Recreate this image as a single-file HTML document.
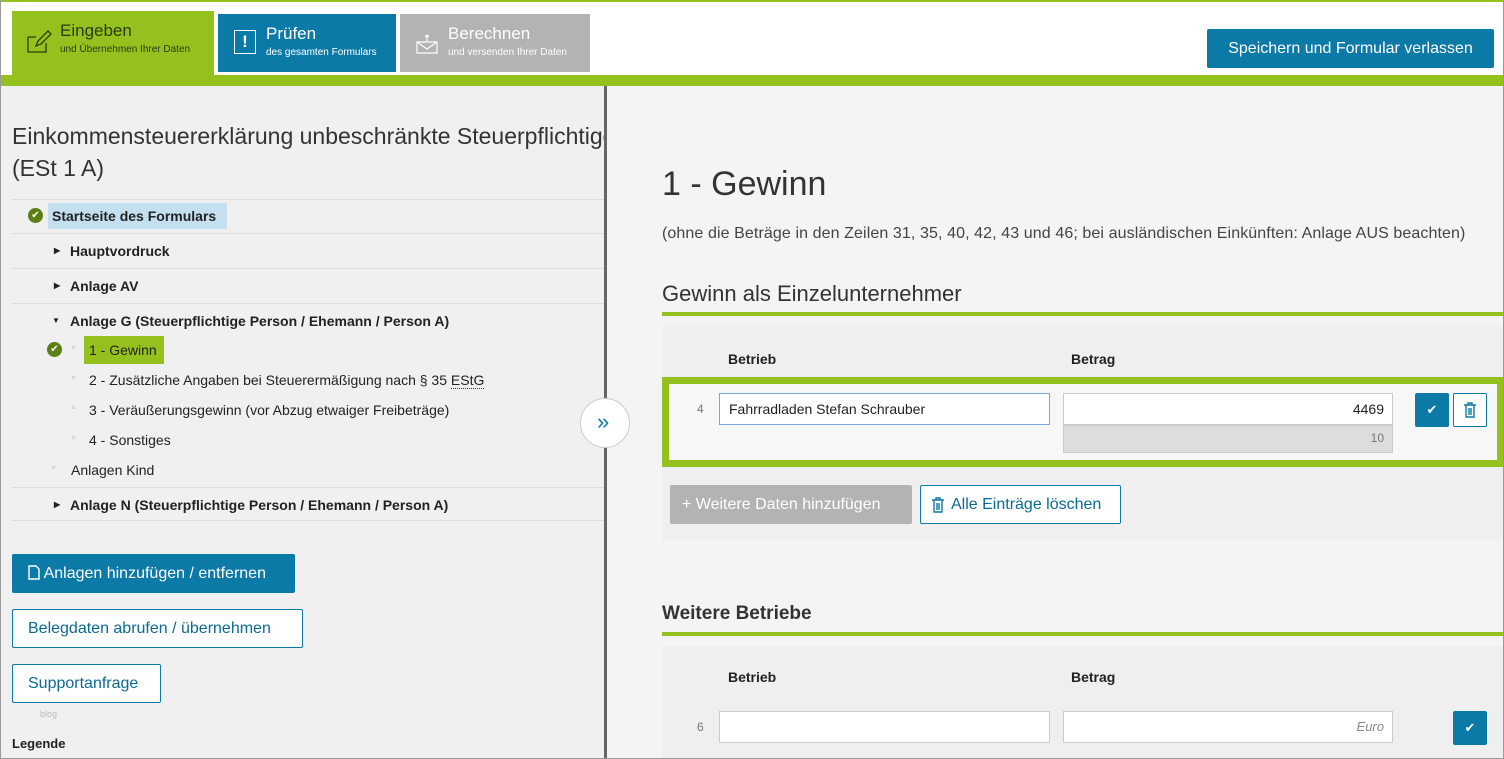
<!DOCTYPE html>
<html><head><meta charset="utf-8"><style>
*{box-sizing:border-box;margin:0;padding:0}
body{width:1504px;height:759px;overflow:hidden;font-family:"Liberation Sans",sans-serif;background:#f4f4f4;position:relative;color:#222}
.a{position:absolute}
.tab{position:absolute;color:#fff;padding:10px 0 0 48px}
.tab b{font-weight:normal;font-size:17px;display:block}
.tab small{font-size:10px;display:block;margin-top:3px}
.row{position:absolute;left:12px;width:592px;border-top:1px solid #ddd;font-size:14px;font-weight:bold;padding-left:58px}
.sub{position:absolute;font-size:14px}
.btn{position:absolute;font-size:16px;border:1px solid #0b7aa6;color:#0b6a93;background:#fff;border-radius:2px;padding:0 15px;line-height:37px}
.inp{position:absolute;background:#fff;border:1px solid #ccc;font-size:14px}
.lbl{position:absolute;font-size:14px;font-weight:bold}
</style></head><body>
<div class="a" style="left:0;top:0;width:1504px;height:2px;background:#95c11f"></div>
<div class="a" style="left:0;top:2px;width:1504px;height:74px;background:#fff"></div>
<div class="a" style="left:0;top:75px;width:1504px;height:11px;background:#95c11f"></div>
<div class="tab" style="left:12px;top:11px;width:202px;height:66px;background:#95c11f;color:#2d3a10"><b>Eingeben</b><small>und Übernehmen Ihrer Daten</small>
<svg class="a" style="left:14px;top:18px" width="26" height="26" viewBox="0 0 26 26" fill="none" stroke="#2d3a10" stroke-width="1.3"><path d="M2 8h8M2 8v15h18v-9"/><path d="M10 17l2-5 10-10 3 3-10 10z"/></svg></div>
<div class="tab" style="left:218px;top:14px;width:178px;height:58px;background:#0b7aa6;padding-left:48px"><b>Prüfen</b><small>des gesamten Formulars</small>
<div class="a" style="left:16px;top:16px;width:22px;height:24px;border:1.5px solid #fff;text-align:center;font-weight:bold;font-size:17px;line-height:21px">!</div></div>
<div class="tab" style="left:400px;top:14px;width:190px;height:58px;background:#b3b3b3"><b>Berechnen</b><small>und versenden Ihrer Daten</small>
<svg class="a" style="left:16px;top:20px" width="22" height="20" viewBox="0 0 22 20" fill="none" stroke="#fff" stroke-width="1.2"><path d="M1 8h20v11H1zM1 8l10 7 10-7M11 1v6M9 3l2-2 2 2"/></svg></div>
<div class="a" style="left:1207px;top:29px;width:287px;height:39px;background:#0b7aa6;color:#fff;font-size:16px;text-align:center;line-height:39px;border-radius:2px">Speichern und Formular verlassen</div>

<div class="a" style="left:0;top:86px;width:604px;height:673px;background:#f0f0f0"></div>
<div class="a" style="left:604px;top:86px;width:3px;height:673px;background:#666"></div>
<div class="a" style="left:12px;top:120px;font-size:23px;color:#333;line-height:32px;width:592px;white-space:nowrap;overflow:hidden">Einkommensteuererklärung unbeschränkte Steuerpflichtige<br>(ESt 1 A)</div>

<div class="row" style="top:199px;height:34px;padding-left:0"></div>
<div class="a" style="left:28px;top:208px;width:15px;height:15px;border-radius:50%;background:#5a7f13;color:#fff;font-size:10px;text-align:center;line-height:15px">✔</div>
<div class="a" style="left:48px;top:203px;width:179px;height:26px;background:#c4dff0;font-size:14px;font-weight:bold;line-height:26px;padding-left:4px">Startseite des Formulars</div>
<div class="row" style="top:233px;height:35px;line-height:34px"><span class="a" style="left:42px;font-size:8px">▶</span>Hauptvordruck</div>
<div class="row" style="top:268px;height:35px;line-height:34px"><span class="a" style="left:42px;font-size:8px">▶</span>Anlage AV</div>
<div class="row" style="top:303px;height:184px;line-height:34px"><span class="a" style="left:40px;font-size:8px">▼</span>Anlage G (Steuerpflichtige Person / Ehemann / Person A)</div>
<div class="a" style="left:47px;top:342px;width:15px;height:15px;border-radius:50%;background:#5a7f13;color:#fff;font-size:10px;text-align:center;line-height:15px">✔</div>
<div class="a" style="left:84px;top:336px;width:80px;height:28px;background:#95c11f"></div>
<div class="sub" style="left:72px;top:342px;color:#999;font-size:9px">▫</div><div class="sub" style="left:89px;top:342px">1 - Gewinn</div>
<div class="sub" style="left:72px;top:372px;color:#999;font-size:9px">▫</div><div class="sub" style="left:89px;top:372px">2 - Zusätzliche Angaben bei Steuerermäßigung nach § 35 <span style="border-bottom:1px dotted #333">EStG</span></div>
<div class="sub" style="left:72px;top:402px;color:#999;font-size:9px">▫</div><div class="sub" style="left:89px;top:402px">3 - Veräußerungsgewinn (vor Abzug etwaiger Freibeträge)</div>
<div class="sub" style="left:72px;top:432px;color:#999;font-size:9px">▫</div><div class="sub" style="left:89px;top:432px">4 - Sonstiges</div>
<div class="sub" style="left:52px;top:462px;color:#999;font-size:9px">▫</div><div class="sub" style="left:71px;top:462px">Anlagen Kind</div>
<div class="row" style="top:487px;height:34px;line-height:34px;border-bottom:1px solid #ddd"><span class="a" style="left:42px;font-size:8px">▶</span>Anlage N (Steuerpflichtige Person / Ehemann / Person A)</div>
<div class="a" style="left:580px;top:398px;width:50px;height:50px;border-radius:50%;background:#fff;border:1px solid #ccc;color:#0b7aa6;font-size:22px;line-height:46px;padding-left:16px">»</div>

<div class="btn" style="left:12px;top:554px;height:39px;width:283px;background:#0b7aa6;color:#fff">
<svg style="vertical-align:-2px" width="12" height="15" viewBox="0 0 12 15" fill="none" stroke="#fff" stroke-width="1.4"><path d="M1 1h7l3 3v10H1z"/></svg> Anlagen hinzufügen / entfernen</div>
<div class="btn" style="left:12px;top:609px;height:39px;width:291px">Belegdaten abrufen / übernehmen</div>
<div class="btn" style="left:12px;top:664px;height:39px;width:149px">Supportanfrage</div>
<div class="a" style="left:40px;top:709px;font-size:9px;color:#bbb">blog</div>
<div class="a" style="left:12px;top:736px;font-size:13px;font-weight:bold">Legende</div>

<div class="a" style="left:662px;top:165px;font-size:34px;color:#333">1 - Gewinn</div>
<div class="a" style="left:662px;top:225px;font-size:16px;color:#444;letter-spacing:0.1px">(ohne die Beträge in den Zeilen 31, 35, 40, 42, 43 und 46; bei ausländischen Einkünften: Anlage AUS beachten)</div>
<div class="a" style="left:662px;top:281px;font-size:22px;color:#333">Gewinn als Einzelunternehmer</div>
<div class="a" style="left:662px;top:312px;width:842px;height:4px;background:#95c11f"></div>
<div class="a" style="left:662px;top:325px;width:842px;height:215px;background:#efefef"></div>
<div class="lbl" style="left:728px;top:351px">Betrieb</div><div class="lbl" style="left:1071px;top:351px">Betrag</div>
<div class="a" style="left:662px;top:377px;width:842px;height:90px;border:7px solid #95c11f;background:#f7f7f7"></div>
<div class="a" style="left:697px;top:402px;font-size:12px;color:#777">4</div>
<div class="inp" style="left:719px;top:393px;width:331px;height:32px;border-color:#7aa7d9;padding:7px 9px">Fahrradladen Stefan Schrauber</div>
<div class="inp" style="left:1063px;top:393px;width:330px;height:32px;text-align:right;padding:7px 8px">4469</div>
<div class="a" style="left:1063px;top:425px;width:330px;height:28px;background:#ddd;border:1px solid #ccc;text-align:right;font-size:12px;color:#777;padding:5px 8px">10</div>
<div class="a" style="left:1415px;top:393px;width:34px;height:34px;background:#0b7aa6;color:#fff;text-align:center;line-height:34px;font-size:13px;border-radius:2px">✔</div>
<div class="a" style="left:1453px;top:393px;width:34px;height:34px;background:#fff;border:1px solid #0b7aa6;border-radius:2px">
<svg class="a" style="left:10px;top:8px" width="12" height="16" viewBox="0 0 12 16" fill="none" stroke="#0b7aa6" stroke-width="1.4"><path d="M0 3h12M4 3V1h4v2M2 3v12h8V3M5 6v7M7 6v7"/></svg></div>
<div class="a" style="left:670px;top:485px;width:242px;height:39px;background:#b3b3b3;color:#fff;font-size:16px;line-height:39px;padding-left:12px;border-radius:2px">+ Weitere Daten hinzufügen</div>
<div class="btn" style="left:920px;top:485px;height:39px;width:201px;padding:0 0 0 30px">
<svg class="a" style="left:11px;top:11px" width="12" height="16" viewBox="0 0 12 16" fill="none" stroke="#0b7aa6" stroke-width="1.4"><path d="M0 3h12M4 3V1h4v2M2 3v12h8V3M5 6v7M7 6v7"/></svg>Alle Einträge löschen</div>

<div class="a" style="left:662px;top:603px;font-size:19px;font-weight:bold;color:#333">Weitere Betriebe</div>
<div class="a" style="left:662px;top:632px;width:842px;height:4px;background:#95c11f"></div>
<div class="a" style="left:662px;top:646px;width:842px;height:113px;background:#efefef"></div>
<div class="lbl" style="left:728px;top:669px">Betrieb</div><div class="lbl" style="left:1071px;top:669px">Betrag</div>
<div class="a" style="left:697px;top:720px;font-size:12px;color:#777">6</div>
<div class="inp" style="left:719px;top:711px;width:331px;height:32px"></div>
<div class="inp" style="left:1063px;top:711px;width:330px;height:32px;text-align:right;padding:7px 8px;font-style:italic;color:#888;font-size:13px">Euro</div>
<div class="a" style="left:1453px;top:711px;width:34px;height:34px;background:#0b7aa6;color:#fff;text-align:center;line-height:34px;font-size:13px;border-radius:2px">✔</div>
<div class="a" style="left:0;top:0;width:1504px;height:759px;border:1px solid #999;border-top:none"></div>
</body></html>
